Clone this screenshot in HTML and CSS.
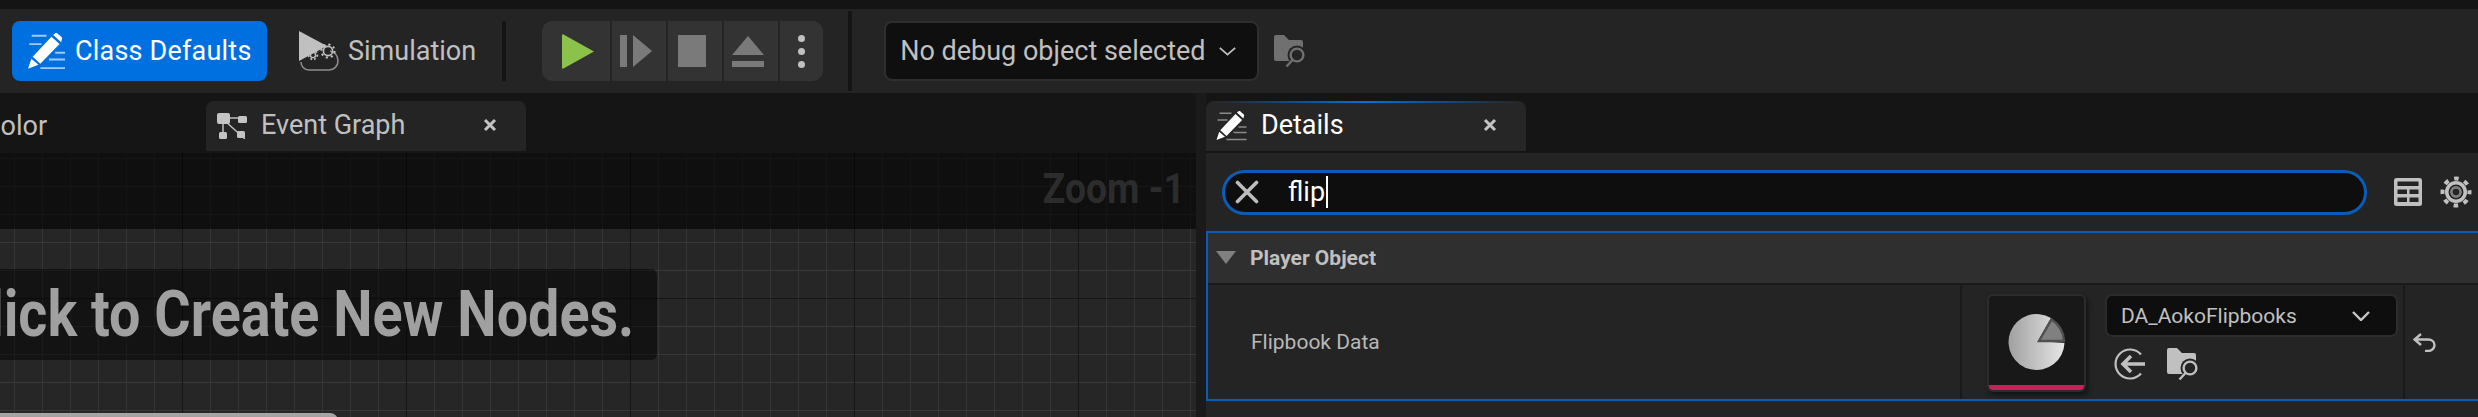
FILE: index.html
```html
<!DOCTYPE html>
<html>
<head>
	<meta charset="utf-8">
	<title>Blueprint Editor</title>
	<link rel="stylesheet" href="styles.css">
</head>
<body>
	<svg class="defs" width="0" height="0">
		<symbol id="folder-search" viewBox="0 0 32 32">
			<path fill="currentColor" d="M0 2a2 2 0 0 1 2-2h8l5 5h12a2 2 0 0 1 2 2v17a2 2 0 0 1-2 2H2a2 2 0 0 1-2-2z"/>
			<circle cx="23" cy="20" r="9.5" fill="var(--cut)"/>
			<circle cx="23" cy="20" r="6.4" fill="none" stroke="currentColor" stroke-width="2.4"/>
			<path d="M18.5 25l-6 6.5" stroke="currentColor" stroke-width="2.4" fill="none"/>
		</symbol>
		<symbol id="pencil" viewBox="0 0 30 30">
			<g stroke="var(--lines)" stroke-width="1.5" fill="none">
				<path d="M3 2.2h12M1 9h10M22 16h8M17 21.5h13M10 28.5h20"/>
			</g>
			<path fill="#fff" d="M0 29l2.7-8.2 5.8 5zM3.8 19.2L19 3l6.6 6L10 25zM20.4 1.6L22 .3c.5-.4 1.2-.4 1.7 0l3.6 3.2c.5.5.5 1.2.1 1.7l-.5 2.4z"/>
		</symbol>
		<symbol id="close" viewBox="0 0 14 14">
			<path d="M2 2l10 10M12 2L2 12" stroke="currentColor" stroke-width="3" fill="none"/>
		</symbol>
	</svg>

	<div class="topstrip"></div>

	<div class="toolbar">
		<button class="tool tool-active">
			<svg class="tool-icon pencil-blue"><use href="#pencil"/></svg>
			Class Defaults
		</button>
		<button class="tool tool-sim">
			<svg class="sim-icon" viewBox="0 0 40 40">
				<path fill="#c0c0c0" d="M0 0l28 15L0 30z"/>
				<path d="M2 31c0 4 3 8 8 8h20c5 0 9-4 9-9s-3-9-8-10" fill="none" stroke="#8c8c8c" stroke-width="1.6"/>
				<circle cx="29" cy="20" r="4.6" fill="none" stroke="#c0c0c0" stroke-width="1.6"/>
				<circle cx="29" cy="20" r="6.6" fill="none" stroke="#c0c0c0" stroke-width="2" stroke-dasharray="2.2 3"/>
				<circle cx="14" cy="24" r="2.6" fill="none" stroke="#c0c0c0" stroke-width="1.4"/>
				<circle cx="14" cy="24" r="4.4" fill="none" stroke="#c0c0c0" stroke-width="1.8" stroke-dasharray="1.8 2"/>
			</svg>
			Simulation
		</button>
		<div class="tool-sep tool-sep-short"></div>

		<div class="play-group">
			<div class="play-btn play-first">
				<svg width="32" height="35" viewBox="0 0 32 35"><path fill="#8bc34a" d="M0 1.5a1 1 0 0 1 1.5-1L32 17.5 1.5 34.500a1 1 0 0 1-1.500-1z"/></svg>
			</div>
			<div class="play-btn">
				<svg width="32" height="32" viewBox="0 0 32 32"><path fill="#7a7a7a" d="M0 0h7v32H0zM13 0l19 16-19 16z"/></svg>
			</div>
			<div class="play-btn">
				<svg width="28" height="32" viewBox="0 0 28 32"><path fill="#7a7a7a" d="M0 0h28v32H0z"/></svg>
			</div>
			<div class="play-btn">
				<svg width="32" height="31" viewBox="0 0 32 31"><path fill="#7a7a7a" d="M16 0l16 19H0zM0 25h32v6H0z"/></svg>
			</div>
			<div class="play-btn play-more">
				<span class="dot"></span><span class="dot"></span><span class="dot"></span>
			</div>
		</div>
		<div class="tool-sep"></div>

		<div class="debug-combo">
			No debug object selected
			<svg class="chevron" viewBox="0 0 20 10" width="19" height="9"><path d="M1.500 1l8.500 7.500L18.500 1" fill="none" stroke="#c0c0c0" stroke-width="2"/></svg>
		</div>
		<svg class="folder-icon folder-dim"><use href="#folder-search"/></svg>
	</div>

	<div class="main">
		<div class="graph-panel">
			<div class="tabs">
				<span class="tab-cut">Color</span>
				<div class="tab tab-graph">
					<svg class="tab-icon" viewBox="0 0 30 26">
						<g stroke="#bdbdbd" stroke-width="1.500" fill="none"><path d="M10 5h14M8 8l20 18M6 10v12"/></g>
						<g fill="#c4c4c4">
							<rect x="0" y="0" width="13" height="11" rx="2"/>
							<rect x="21" y="3" width="9" height="7" rx="1.500"/>
							<rect x="2" y="19" width="8" height="7" rx="1.500"/>
							<rect x="20" y="18" width="8" height="7" rx="1.500"/>
						</g>
					</svg>
					<span class="tab-label">Event Graph</span>
					<svg class="tab-close"><use href="#close"/></svg>
				</div>
			</div>
			<div class="canvas">
				<div class="zoom-band"><span class="zoom-text">Zoom -1</span></div>
				<div class="toast">Right-Click to Create New Nodes.</div>
				<div class="node-peek"></div>
			</div>
		</div>

		<div class="details-panel">
			<div class="tabs">
				<div class="tab tab-details">
					<svg class="tab-icon pencil-grey"><use href="#pencil"/></svg>
					<span class="tab-label tab-label-on">Details</span>
					<svg class="tab-close"><use href="#close"/></svg>
				</div>
			</div>
			<div class="details-body">
				<div class="search-row">
					<div class="search-box">
						<svg class="search-clear" viewBox="0 0 24 24"><path d="M2.500 2.500l19 19M21.500 2.500l-19 19" stroke="#bdbdbd" stroke-width="3.600" stroke-linecap="round" fill="none"/></svg>
						<span class="search-text">flip</span><span class="caret"></span>
					</div>
					<svg class="table-icon" viewBox="0 0 28 28">
						<rect width="28" height="28" rx="2.500" fill="#c0c0c0"/>
						<path fill="#242424" d="M3.500 3.500h21V8h-21zM3.500 11.500H13V16H3.500zM15.500 11.500h9V16h-9zM3.500 19.500H13V24H3.500zM15.500 19.500h9V24h-9z"/>
					</svg>
					<svg class="gear-icon" viewBox="0 0 32 32">
						<circle cx="16" cy="16" r="11" fill="#c0c0c0"/>
						<circle cx="16" cy="16" r="13.500" fill="none" stroke="#c0c0c0" stroke-width="4" stroke-dasharray="4.600 6" stroke-dashoffset="2.300"/>
						<circle cx="16" cy="16" r="7.500" fill="#242424"/>
						<circle cx="16" cy="16" r="4.600" fill="none" stroke="#808080" stroke-width="2.600"/>
					</svg>
				</div>

				<div class="section">
					<div class="category">
						<svg class="category-arrow" viewBox="0 0 20 13"><path fill="#808080" d="M0 0h20L10 13z"/></svg>
						Player Object
					</div>
					<div class="prop-row">
						<div class="prop-name">Flipbook Data</div>
						<div class="prop-value">
							<div class="thumb">
								<svg class="pie" viewBox="-30 -30 60 60">
									<defs>
										<linearGradient id="pie-fill" x1="0" x2="1">
											<stop offset="0" stop-color="#a0a0a0"/>
											<stop offset="1" stop-color="#e6e6e6"/>
										</linearGradient>
									</defs>
									<path fill="url(#pie-fill)" d="M14-24A28 28 0 1 0 27.500 1L1-1z"/>
									<path fill="#808080" stroke="#505050" stroke-width="2.400" d="M14.500-22.500A27 27 0 0 1 27-1L2-1z"/>
								</svg>
								<div class="thumb-bar"></div>
							</div>
							<div class="asset">
								<div class="asset-combo">
									<span>DA_AokoFlipbooks</span>
									<svg class="asset-chevron" viewBox="0 0 18 10"><path d="M1 1l8 8 8-8" fill="none" stroke="#c8c8c8" stroke-width="2.400"/></svg>
								</div>
								<div class="asset-actions">
									<svg class="use-icon" viewBox="0 0 32 32">
										<path d="M27 6.500A14.500 14.500 0 1 0 27 25.500" fill="none" stroke="#c0c0c0" stroke-width="2.200"/>
										<path d="M31 16H9M17 8l-8 8 8 8" fill="none" stroke="#c0c0c0" stroke-width="3.600"/>
									</svg>
									<svg class="folder-icon folder-lit"><use href="#folder-search"/></svg>
								</div>
							</div>
						</div>
						<div class="prop-reset">
							<svg class="reset-icon" viewBox="0 0 23 19"><path d="M8 1L1.500 6.500 8 12M2 6.500h13c4 0 6.500 2.500 6.500 5.500S19 18 15 18h-3" fill="none" stroke="#c0c0c0" stroke-width="2.400"/></svg>
						</div>
					</div>
				</div>
			</div>
		</div>
	</div>
</body>
</html>
```

FILE: styles.css
```css
html, body {
	margin: 0;
	height: 100%;
	overflow: hidden;
}

body {
	width: 2478px;
	height: 417px;
	background-color: #242424;
	font-family: Roboto, "Liberation Sans", sans-serif;
	font-size: 27px;
	color: #c0c0c0;
	display: flex;
	flex-direction: column;
}

.defs {
	position: absolute;
}

.topstrip {
	height: 9px;
	background-color: #141414;
}

/* toolbar */
.toolbar {
	height: 84px;
	padding-left: 12px;
	background-color: #242424;
	display: flex;
	align-items: center;
	--cut: #242424;
}

.tool {
	height: 60px;
	border: 0;
	border-radius: 8px;
	background: none;
	color: #c0c0c0;
	font: inherit;
	display: flex;
	align-items: center;
	padding: 0;
}

.tool-active {
	width: 255px;
	padding-left: 16px;
	gap: 10px;
	background-color: #0070e0;
	color: #fff;
	letter-spacing: 0.2px;
	box-sizing: border-box;
}

.tool-icon {
	width: 37px;
	height: 37px;
	flex: none;
}

.pencil-blue {
	--lines: #9fcbf6;
}

.pencil-grey {
	--lines: #8a8a8a;
}

.tool-sim {
	margin-left: 32px;
	gap: 9px;
}

.sim-icon {
	width: 40px;
	height: 40px;
}

.tool-sep {
	width: 4px;
	height: 80px;
	margin-left: 25px;
	margin-right: 32px;
	background-color: #151515;
}

.tool-sep-short {
	height: 60px;
	margin-left: 26px;
	margin-right: 36px;
}

.play-group {
	height: 60px;
	border-radius: 10px;
	background-color: #333;
	display: flex;
	overflow: hidden;
}

.play-btn {
	width: 56px;
	box-sizing: border-box;
	padding-right: 6px;
	display: flex;
	align-items: center;
	justify-content: center;
	border-left: 2px solid #242424;
}

.play-first {
	width: 68px;
	border-left: 0;
	padding-right: 0;
	padding-left: 4px;
}

.play-more {
	width: 45px;
	padding-right: 0;
	flex-direction: column;
	gap: 6px;
}

.dot {
	width: 7px;
	height: 7px;
	border-radius: 50%;
	background-color: #c0c0c0;
}

.debug-combo {
	box-sizing: border-box;
	width: 375px;
	height: 60px;
	margin-right: 15px;
	padding-left: 14px;
	border: 2px solid #2e2e2e;
	border-radius: 8px;
	background-color: #0f0f0f;
	display: flex;
	align-items: center;
	gap: 12px;
	white-space: nowrap;
}

.folder-icon {
	width: 32px;
	height: 32px;
}

.folder-dim {
	color: #707070;
}

.folder-lit {
	color: #c0c0c0;
}

/* main area */
.main {
	flex: 1;
	display: flex;
	gap: 10px;
	min-height: 0;
	background-color: #1a1a1a;
}

.graph-panel {
	width: 1196px;
	display: flex;
	flex-direction: column;
}

.tabs {
	height: 60px;
	flex: none;
	padding-top: 8px;
	box-sizing: border-box;
	background-color: #151515;
	display: flex;
}

.tab-cut {
	width: 206px;
	line-height: 50px;
	text-indent: -17px;
	overflow: hidden;
}

.tab {
	width: 320px;
	height: 50px;
	box-sizing: border-box;
	border-radius: 8px 8px 0 0;
	background-color: #242424;
	display: flex;
	align-items: center;
	padding-left: 11px;
	position: relative;
}

.tab-icon {
	width: 30px;
	height: 26px;
}

.tab-label {
	margin-left: 14px;
	margin-bottom: 2px;
	flex: 1;
}

.tab-label-on {
	color: #fff;
}

.tab-close {
	width: 14px;
	height: 14px;
	margin-right: 29px;
	margin-bottom: 2px;
	color: #c4c4c4;
}

.tab-details {
	background-color: #262626;
	padding-left: 10px;
}

.tab-details .tab-icon {
	width: 31px;
	height: 30px;
}

.tab-details::before {
	content: "";
	position: absolute;
	left: 8px;
	right: 8px;
	top: 0;
	height: 2px;
	background: linear-gradient(90deg, transparent, #0070e0, transparent);
}

/* graph canvas */
.canvas {
	flex: 1;
	position: relative;
	overflow: hidden;
	background-color: #262626;
	background-image:
		linear-gradient(90deg, #161616 1px, transparent 1px),
		linear-gradient(#161616 1px, transparent 1px),
		linear-gradient(90deg, #363636 1px, transparent 1px),
		linear-gradient(#383838 1px, transparent 1px);
	background-size: 224px 224px, 224px 224px, 28px 28px, 28px 28px;
	background-position: 182px 0, 0 145px, 14px 0, 0 5px;
}

.zoom-band {
	height: 76px;
	box-sizing: border-box;
	padding: 11px 11px 0 0;
	background-color: rgba(0, 0, 0, 0.6);
	color: #2c2c2c;
	font-size: 42px;
	font-weight: 700;
	line-height: 50px;
	text-align: right;
}

.zoom-text {
	display: inline-block;
	transform: scaleX(0.89);
	transform-origin: right;
}

.toast {
	position: absolute;
	right: 539px;
	top: 116px;
	height: 91px;
	padding: 0 26px 0 20px;
	border-radius: 0 6px 6px 0;
	background-color: rgba(0, 0, 0, 0.5);
	color: #a0a0a0;
	font-size: 64px;
	font-weight: 700;
	line-height: 91px;
	white-space: nowrap;
	transform: scaleX(0.87);
	transform-origin: right;
}

.node-peek {
	position: absolute;
	left: -20px;
	top: 260px;
	width: 358px;
	height: 20px;
	border-radius: 0 8px 0 0;
	background: linear-gradient(#a8a8a8, #808080);
}

/* details panel */
.details-panel {
	flex: 1;
	display: flex;
	flex-direction: column;
	min-width: 0;
}

.details-body {
	flex: 1;
	background-color: #242424;
	--cut: #242424;
}

.search-row {
	height: 78px;
	box-sizing: border-box;
	padding-left: 16px;
	display: flex;
	align-items: center;
}

.search-box {
	box-sizing: border-box;
	width: 1145px;
	height: 45px;
	padding-left: 10px;
	border: 3px solid #0a5cb8;
	border-radius: 23px;
	background-color: #0e0e0e;
	display: flex;
	align-items: center;
}

.search-clear {
	width: 24px;
	height: 24px;
}

.search-text {
	margin-left: 29px;
	color: #fff;
}

.caret {
	width: 2px;
	height: 32px;
	margin-left: 1px;
	background-color: #fff;
}

.table-icon {
	width: 28px;
	height: 28px;
	margin-left: 27px;
}

.gear-icon {
	width: 32px;
	height: 32px;
	margin-left: 18px;
}

.section {
	border-top: 2px solid #0a5cb8;
	border-bottom: 2px solid #0a5cb8;
	border-left: 2px solid #0a5cb8;
}

.category {
	height: 50px;
	box-sizing: border-box;
	padding-left: 8px;
	padding-bottom: 1px;
	background-color: #2f2f2f;
	color: #c0c0c0;
	font-size: 21px;
	font-weight: 700;
	display: flex;
	align-items: center;
	gap: 14px;
}

.category-arrow {
	width: 20px;
	height: 13px;
}

.prop-row {
	height: 114px;
	border-top: 2px solid #1a1a1a;
	display: flex;
}

.prop-name {
	width: 752px;
	padding-left: 43px;
	box-sizing: border-box;
	font-size: 21px;
	color: #b8b8b8;
	display: flex;
	align-items: center;
}

.prop-value {
	box-sizing: border-box;
	width: 445px;
	padding: 9px 0 0 25px;
	border-left: 2px solid #1a1a1a;
	border-right: 2px solid #1a1a1a;
	display: flex;
	gap: 19px;
}

.thumb {
	box-sizing: border-box;
	width: 99px;
	height: 98px;
	border: 2px solid #2c2c2c;
	border-radius: 6px;
	background-color: #181818;
	box-shadow: 2px 3px 5px rgba(0, 0, 0, 0.5);
	display: flex;
	flex-direction: column;
	align-items: center;
	justify-content: space-between;
	overflow: hidden;
}

.pie {
	width: 60px;
	height: 60px;
	margin-top: 16px;
}

.thumb-bar {
	width: 100%;
	height: 5px;
	background-color: #c8215a;
}

.asset {
	width: 293px;
}

.asset-combo {
	box-sizing: border-box;
	height: 43px;
	padding: 0 26px 0 14px;
	border: 2px solid #2c2c2c;
	border-radius: 7px;
	background-color: #0e0e0e;
	font-size: 21px;
	display: flex;
	align-items: center;
	justify-content: space-between;
}

.asset-chevron {
	width: 18px;
	height: 10px;
}

.asset-actions {
	margin: 11px 0 0 9px;
	display: flex;
	gap: 21px;
}

.use-icon {
	width: 32px;
	height: 32px;
}

.prop-reset {
	padding-left: 8px;
	display: flex;
	align-items: center;
}

.reset-icon {
	width: 23px;
	height: 19px;
}
```
